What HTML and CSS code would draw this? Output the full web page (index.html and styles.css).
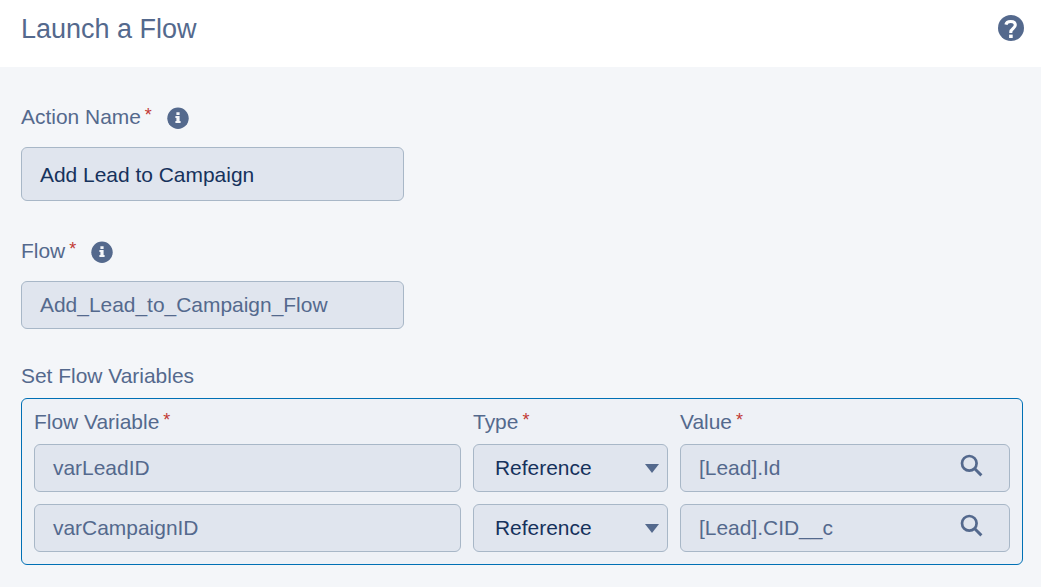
FILE: index.html
```html
<!DOCTYPE html>
<html lang="en">
<head>
<meta charset="utf-8">
<title>Launch a Flow</title>
<link rel="stylesheet" href="styles.css">
</head>
<body>
<svg class="defs" aria-hidden="true">
  <symbol id="info" viewBox="0 0 22 22">
    <circle cx="11" cy="11.3" r="10.7" fill="#54698d"/>
    <path d="M9.4 5.2h3.2v2.7H9.4zM8.4 9.1h4.2v4.8h1v2H8.4v-2h1v-2.8h-1z" fill="#f4f6f9"/>
  </symbol>
  <symbol id="search" viewBox="0 0 24 24">
    <circle cx="9.3" cy="9.3" r="7.3" fill="none" stroke="#54698d" stroke-width="2.7"/>
    <path d="M14.5 14.5L21.4 21.4" fill="none" stroke="#54698d" stroke-width="2.9"/>
  </symbol>
</svg>
<header class="header">
  <h1 class="title">Launch a Flow</h1>
  <svg class="help" viewBox="0 0 26 26" role="img" aria-label="Help">
    <circle cx="13" cy="13" r="13" fill="#54698d"/>
    <path d="M7.9 9.6C8.3 7.6 10.2 6.5 12.7 6.5c2.7 0 4.6 1.3 4.6 3.6 0 3.4-4.5 3.4-4.5 7v.8" fill="none" stroke="#fff" stroke-width="3.1"/>
    <path d="M11.1 19.6h3.6v3.4h-3.6z" fill="#fff"/>
  </svg>
</header>
<main class="form">
  <section class="group">
    <div class="label">Action Name<span class="required">*</span><svg class="info"><use href="#info"/></svg></div>
    <div class="field field-tall">Add Lead to Campaign</div>
  </section>
  <section class="group">
    <div class="label">Flow<span class="required">*</span><svg class="info"><use href="#info"/></svg></div>
    <div class="field">Add_Lead_to_Campaign_Flow</div>
  </section>
  <section>
    <h2 class="label section-label">Set Flow Variables</h2>
    <div class="panel">
      <div class="label column-label">Flow Variable<span class="required">*</span></div>
      <div class="label column-label">Type<span class="required">*</span></div>
      <div class="label column-label">Value<span class="required">*</span></div>
      <div class="field">varLeadID</div>
      <div class="field select">Reference<span class="caret"></span></div>
      <div class="field lookup">[Lead].Id<svg class="search"><use href="#search"/></svg></div>
      <div class="field">varCampaignID</div>
      <div class="field select">Reference<span class="caret"></span></div>
      <div class="field lookup">[Lead].CID__c<svg class="search"><use href="#search"/></svg></div>
    </div>
  </section>
</main>
</body>
</html>
```
FILE: styles.css
```css
* { box-sizing: border-box; }
body {
  margin: 0;
  min-height: 587px;
  background: #f4f6f9;
  color: #54698d;
  font: 20.95px/24px "Liberation Sans", Arial, sans-serif;
}
.defs { display: none; }
.header {
  display: flex;
  align-items: center;
  justify-content: space-between;
  height: 67px;
  padding: 0 17px 10px 21px;
  background: #fff;
}
.title { margin: 0; font-size: 27px; font-weight: 400; line-height: 32px; }
.help { width: 26px; height: 26px; margin-bottom: 1px; }
.form { padding: 38px 18px 22px 21px; }
.group { width: 383px; margin-bottom: 38px; }
.group + .group { margin-bottom: 35px; }
.label {
  display: flex;
  height: 24px;
  margin: 0 0 18px;
  font-size: 20.95px;
  font-weight: 400;
}
.section-label { margin-bottom: 10px; }
.column-label { margin-bottom: -2px; }
.required {
  margin-left: 4px;
  color: #c23934;
  font-size: 18px;
  line-height: 20px;
}
.info { width: 22px; height: 22px; margin: 2px 0 0 15px; }
.field {
  display: flex;
  align-items: center;
  height: 48px;
  padding: 0 18px;
  border: 1px solid #a8b7c7;
  border-radius: 6px;
  background: #e0e5ee;
}
.field-tall { height: 54px; padding-top: 2px; color: #16325c; }
.panel {
  display: grid;
  grid-template-columns: 427px 195px 330px;
  gap: 12px;
  height: 167px;
  padding: 11px 12px 12px;
  border: 1px solid #0070b5;
  border-radius: 6px;
  background: #eef1f6;
}
.select { justify-content: space-between; padding: 0 8px 0 21px; color: #16325c; }
.caret {
  border: 7px solid transparent;
  border-top: 9px solid #54698d;
  border-bottom: 0;
}
.lookup { justify-content: space-between; padding-right: 25px; }
.search { width: 24px; height: 24px; margin-bottom: 5px; }
```
